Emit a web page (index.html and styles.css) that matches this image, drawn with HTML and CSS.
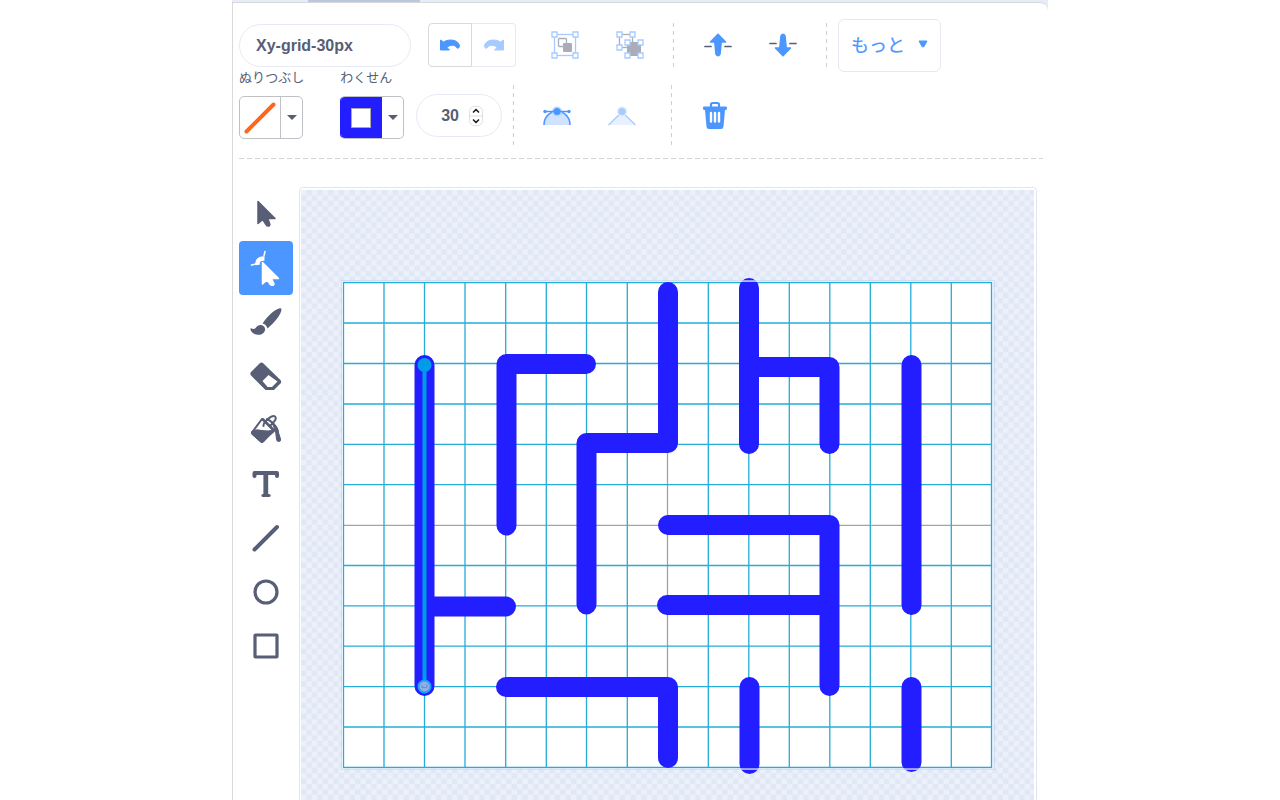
FILE: index.html
```html
<!DOCTYPE html>
<html lang="ja">
<head>
<meta charset="utf-8">
<title>Xy-grid-30px</title>
<link rel="stylesheet" href="styles.css">
</head>
<body>
<div class="editor">
  <div class="tabs"><div class="tab"></div></div>
  <main class="panel">
    <div class="toolbar">
      <div class="row">
        <input class="pill name" type="text" value="Xy-grid-30px" aria-label="コスチューム">
        <div class="history">
          <button class="undo" type="button" aria-label="とりけし">
            <svg width="22" height="16" viewBox="0 0 22 16"><path fill="#4c97ff" stroke="#4c97ff" stroke-linejoin="round" d="M1.500 3V13H10.500L8 10.500C11 7.500 16 7.500 17.500 10.500 18.500 12 20.500 11 20.500 9 19.500 2.500 10 1.500 4.500 5Z"/></svg>
          </button>
          <button class="redo" type="button" aria-label="やりなおし" disabled>
            <svg width="22" height="16" viewBox="0 0 22 16"><path fill="#a6cbff" stroke="#a6cbff" stroke-linejoin="round" d="M20.500 3V13H11.500L14 10.500C11 7.500 6 7.500 4.500 10.500 3.500 12 1.500 11 1.500 9 2.500 2.500 12 1.500 17.500 5Z"/></svg>
          </button>
        </div>
        <div class="group pair">
          <button type="button" aria-label="グループか" disabled>
            <svg width="28" height="28" viewBox="0 0 28 28" fill="none"><rect x="3.500" y="3.500" width="21" height="21" stroke="#a6cbff" stroke-width="1.300"/><rect x="7.500" y="7.500" width="8" height="8" rx="1" stroke="#aaacba" stroke-width="1.300"/><rect x="12" y="12" width="9" height="9" rx="1" fill="#aaacba"/><g fill="#fff" stroke="#a6cbff" stroke-width="1.300"><path d="M1 1h5v5H1zM22 1h5v5h-5zM1 22h5v5H1zM22 22h5v5h-5z"/></g></svg>
          </button>
          <button type="button" aria-label="グループかいじょ" disabled>
            <svg width="28" height="28" viewBox="0 0 28 28" fill="none"><rect x="3.500" y="3.500" width="13" height="13" stroke="#aaacba" stroke-width="1.300"/><rect x="11" y="11" width="14" height="14" fill="#aaacba"/><g fill="#fff" stroke="#a6cbff" stroke-width="1.300"><path d="M1 1h5v5H1zM14 1h5v5h-5zM1 14h5v5H1zM9 9h5v5H9zM22 9h5v5h-5zM9 22h5v5H9zM22 22h5v5h-5z"/></g></svg>
          </button>
        </div>
        <span class="divider"></span>
        <div class="order pair">
          <button type="button" aria-label="てまえにだす">
            <svg width="28" height="24" viewBox="0 0 28 24"><path stroke="#575e75" stroke-width="1.700" stroke-linecap="round" d="M1 13.500h6M21 13.500h6"/><path fill="#4c97ff" stroke="#4c97ff" stroke-width="1.600" stroke-linejoin="round" d="M14 1.300 21.500 9H17.200L16 21Q14 24.500 12 21L10.800 9H6.500Z"/></svg>
          </button>
          <button type="button" aria-label="おくにさげる">
            <svg width="28" height="24" viewBox="0 0 28 24"><path stroke="#575e75" stroke-width="1.700" stroke-linecap="round" d="M1 10.500h6M21 10.500h6"/><path fill="#4c97ff" stroke="#4c97ff" stroke-width="1.600" stroke-linejoin="round" d="M14 22.700 21.500 15H17.200L16 3Q14-.5 12 3L10.800 15H6.500Z"/></svg>
          </button>
        </div>
        <span class="divider"></span>
        <button class="more" type="button">もっと
          <svg width="10" height="8" viewBox="0 0 10 8"><path fill="#4c97ff" stroke="#4c97ff" stroke-linejoin="round" d="M1 1h8L6 6.500Q5 7.500 4 6.500Z"/></svg>
        </button>
      </div>
      <div class="row second">
        <div class="field">
          <span class="caption">ぬりつぶし</span>
          <button class="swatch" type="button" aria-label="ぬりつぶし">
            <span class="color"><svg width="32" height="32" viewBox="0 0 32 32"><path stroke="#ff661a" stroke-width="4" stroke-linecap="round" d="M2.500 29.500 29.500 2.500"/></svg></span>
            <span class="arrow"></span>
          </button>
        </div>
        <div class="field outline">
          <span class="caption">わくせん</span>
          <button class="swatch filled" type="button" aria-label="わくせん">
            <span class="color blue"><span class="hole"></span></span>
            <span class="arrow"></span>
          </button>
        </div>
        <label class="pill width">
          <input type="number" value="30" aria-label="わくせんのふとさ">
          <svg width="14" height="20" viewBox="0 0 14 20" fill="none"><rect x=".5" y=".5" width="13" height="19" rx="5" stroke="#dedede"/><path stroke="#dedede" d="M0 10h14"/><path stroke="#222" stroke-width="1.700" stroke-linecap="round" stroke-linejoin="round" d="M4.500 6 7 3.500 9.500 6M4.500 14 7 16.500 9.500 14"/></svg>
        </label>
        <span class="divider tall"></span>
        <div class="points pair">
          <button type="button" aria-label="きょくせん">
            <svg width="28" height="20" viewBox="0 0 28 20"><path fill="#cfe2ff" stroke="#4c97ff" stroke-width="1.500" d="M1 19C1 1 27 1 27 19"/><circle cx="14" cy="5.500" r="5" fill="#b8d5ff"/><path stroke="#4c97ff" stroke-width="1.500" d="M2 5.500h24"/><circle cx="14" cy="5.500" r="3.500" fill="#4c97ff"/><circle cx="2" cy="5.500" r="1.700" fill="#4c97ff"/><circle cx="26" cy="5.500" r="1.700" fill="#4c97ff"/></svg>
          </button>
          <button type="button" aria-label="とがる" disabled>
            <svg width="28" height="20" viewBox="0 0 28 20"><path fill="#e8f1ff" stroke="#a6cbff" stroke-width="1.300" d="M.5 19 14 6 27.500 19"/><circle cx="14" cy="5.500" r="5" fill="#dbe9ff"/><circle cx="14" cy="5.500" r="3.500" fill="#a6cbff"/></svg>
          </button>
        </div>
        <span class="divider tall"></span>
        <button class="trash" type="button" aria-label="さくじょ">
          <svg width="26" height="28" viewBox="0 0 26 28"><path fill="none" stroke="#4c97ff" stroke-width="2.200" d="M9 6V3.500Q9 2 10.500 2H15.500Q17 2 17 3.500V6"/><path fill="#4c97ff" d="M2 5.500H24Q25.500 5.500 25 7L24.500 9H23L21.500 25.500Q21.300 28 19 28H7Q4.700 28 4.500 25.500L3 9H1.500L1 7Q.5 5.500 2 5.500Z"/><path stroke="#fff" stroke-width="2.400" stroke-linecap="round" d="M9 12v8.500M13 12v8.500M17 12v8.500"/></svg>
        </button>
      </div>
    </div>
    <div class="work">
      <div class="tools">
        <button class="tool" type="button" aria-label="せんたく"><svg width="32" height="32" viewBox="0 0 32 32"><path fill="#575e75" stroke="#575e75" stroke-width="1.500" stroke-linejoin="round" d="M8 3.500V25.500L12.700 21.500 16 26.500Q17.500 28.800 19.500 27.500 20.300 26.500 19.500 25L17.800 20.500H25Z"/></svg></button>
        <button class="tool active" type="button" aria-label="かたちをかえる"><svg width="32" height="36" viewBox="0 0 32 36"><path fill="none" stroke="#fff" stroke-width="1.500" stroke-linecap="round" d="M1.500 15 6 14M14 5.500 15 1.500"/><path fill="none" stroke="#fff" stroke-width="4.500" d="M7.500 15Q7 8 14.500 8.500"/><path fill="#fff" stroke="#fff" stroke-width="1.500" stroke-linejoin="round" d="M12.500 12.500V34L17 30 20.300 34.500Q21.800 36 23.500 35 24.300 34.200 23.500 33L21.500 28.500H28.500Z"/></svg></button>
        <button class="tool" type="button" aria-label="ふで"><svg width="32" height="32" viewBox="0 0 32 32" fill="#575e75"><path d="M31 2.500C28 .5 17 10 12.500 17.500Q16 18 17.500 22.500C24 17 31 9 31.500 3.500ZM11 19C6.500 18.500 6 23.500 3 23 1.500 22.700.2 21.500.5 23.500 1 27 7 30.500 12 28 17 25 15.500 19.500 11 19Z"/></svg></button>
        <button class="tool" type="button" aria-label="けしゴム"><svg width="32" height="32" viewBox="0 0 32 32"><path fill="#575e75" stroke="#575e75" stroke-width="2" stroke-linejoin="round" d="M10.500 4 1.500 13Q1 14 2 15L16 29H23.500L30 22.500Q30.500 21.500 29.500 20.500L12.500 4Q11.500 3 10.500 4Z"/><path fill="#fff" d="M18.500 15 12.500 21 17.500 27H22L27.500 21.500Z"/></svg></button>
        <button class="tool" type="button" aria-label="ぬりつぶし"><svg width="32" height="32" viewBox="0 0 32 32"><path fill="#fff" stroke="#575e75" stroke-width="2" stroke-linejoin="round" d="M12 5 2 18.500 12 27.500 24 17Z"/><path fill="#575e75" stroke="#575e75" stroke-linejoin="round" d="M2 17Q7 15 12 16.500 18 18 25 15.500L13.500 28Q12 29.300 10.500 28L1.500 20Z"/><path fill="none" stroke="#575e75" stroke-width="2" stroke-linecap="round" d="M13.500 12C13 8 22 .5 25 2.500 27.500 5 23 9 21 11M13 5 24 16M17 5Q25 9 28 17"/><path fill="#575e75" stroke="#575e75" d="M23 11Q27 13 28 17L30.500 25Q31 27.500 28.800 27.500 26.500 27.500 26.500 25L25.500 17Z"/></svg></button>
        <button class="tool" type="button" aria-label="テキスト"><svg width="32" height="32" viewBox="0 0 32 32"><path fill="none" stroke="#575e75" stroke-width="4" stroke-linecap="round" stroke-linejoin="round" d="M4.500 8V5H27V8"/><path stroke="#575e75" stroke-width="4.800" d="M15.800 5v23"/><path stroke="#575e75" stroke-width="3.200" stroke-linecap="round" d="M13 27.500h6"/></svg></button>
        <button class="tool" type="button" aria-label="ちょくせん"><svg width="32" height="32" viewBox="0 0 32 32"><path stroke="#575e75" stroke-width="4" stroke-linecap="round" d="M4.500 27.500 27 5"/></svg></button>
        <button class="tool" type="button" aria-label="えん"><svg width="32" height="32" viewBox="0 0 32 32"><circle cx="16" cy="16" r="11" fill="none" stroke="#575e75" stroke-width="3.200"/></svg></button>
        <button class="tool" type="button" aria-label="しかく"><svg width="32" height="32" viewBox="0 0 32 32"><rect x="5" y="5" width="22" height="22" rx=".5" fill="none" stroke="#575e75" stroke-width="3.200"/></svg></button>
      </div>
      <div class="canvas">
        <svg class="drawing" viewBox="300 188 736 640" role="img" aria-label="めいろ">
          <defs>
            <pattern id="checks" x="301" y="190" width="10.800" height="10.800" patternUnits="userSpaceOnUse"><path fill="#ebf0fb" d="M0 0h10.800v10.800H0z"/><path fill="#e1e8f5" d="M5.400 0h5.400v5.400H5.400zM0 5.400h5.400v5.400H0z"/></pattern>
          </defs>
          <path fill="url(#checks)" d="M301 190H1034V828H301z"/>
          <path fill="#fff" d="M343 282h649v486H343z"/>
          <path stroke="#a3a3a3" stroke-width="1.300" d="M343 525.300h648M667.500 283v484"/>
          <path fill="none" stroke="#26acd8" stroke-width="1.300" d="M343.500 282.500h648v485h-648zM343 323h648M343 363.500h648M343 404h648M343 444.300h648M343 484.700h648M343 565.500h648M343 605.800h648M343 646.200h648M343 686.600h648M343 727h648M384 283v484M424.500 283v484M465 283v484M505.700 283v484M546.300 283v484M586.500 283v484M627.300 283v484M708.300 283v484M748.800 283v484M789.300 283v484M829.800 283v484M870.300 283v484M910.800 283v484M951.300 283v484"/>
          <g fill="none" stroke="#221eff" stroke-width="20" stroke-linecap="round" stroke-linejoin="round">
            <path d="M424.500 365V686M424.500 606.500H506M506.500 525.500V364H586M586.500 604.500V443H668V292M749 288V444M749 367H829.500V444M668 525H829.500V686M667 605H829.500M911.500 365V605M506 687H668V758M749.500 687V764M911.500 687V762"/>
          </g>
          <path fill="none" stroke="#c8d7f2" stroke-opacity=".7" stroke-width="1.200" d="M341.500 280.500h653v489h-653z"/>
          <path fill="none" stroke="#eff6ff" stroke-opacity=".7" d="M342.500 281.500h650.500v487.200h-650.500z"/>
          <path stroke="#009be8" stroke-width="4" d="M424.500 365V686"/>
          <circle cx="424.500" cy="365" r="7" fill="#009bea"/>
          <circle cx="424.500" cy="686.500" r="6" fill="#91afe9" stroke="#16a4f4" stroke-width="2"/>
          <path fill="none" stroke="#6a87dc" d="M422 685v3l2-1 1 1 2-1v-3"/>
        </svg>
      </div>
    </div>
  </main>
</div>
</body>
</html>
```
FILE: styles.css
```css
* { box-sizing: border-box; }
body { margin: 0; background: #fff; color: #575e75; font-family: "Liberation Sans", "Noto Sans CJK JP", sans-serif; }
button { display: flex; align-items: center; justify-content: center; margin: 0; padding: 0; border: 0; background: none; font: inherit; color: inherit; }
svg { display: block; flex: none; }
.editor { display: flex; flex-direction: column; max-width: 816px; height: 100vh; margin: 0 auto; overflow: hidden; background: #e6edfa; }
.tabs { flex: none; height: 2px; background: #e6edfa; }
.tab { width: 112px; height: 2px; margin-left: 76px; background: #bac8de; }
.panel { flex: 1; min-height: 0; padding: 16px 5px 0 6px; border: 1px solid #d9d9d9; border-width: 1px 0 0 1px; border-top-right-radius: 8px; background: #fff; }
.toolbar { padding-bottom: 12px; background: repeating-linear-gradient(90deg, #d6d6d6 0 5px, transparent 5px 8px) left bottom / 100% 1px no-repeat; }
.row { display: flex; align-items: center; height: 52px; }
.row.second { align-items: flex-end; height: 76px; }
.pill { height: 43px; border: 1px solid #e5eaf4; border-radius: 22px; background: #fff; color: #575e75; font-size: 16px; font-weight: bold; }
.name { width: 172px; padding: 2px 16px 0; font-family: inherit; }
.history { display: flex; margin-left: 17px; }
.history button { width: 44px; height: 44px; border: 1px solid #d9d9d9; }
.history .undo { border-radius: 4px 0 0 4px; }
.history .redo { border-color: #e5eaf0; border-left: 0; border-radius: 0 4px 4px 0; }
.pair { display: flex; gap: 37px; }
.group { margin-left: 35px; }
.divider { width: 1px; height: 44px; margin-left: 29px; background: repeating-linear-gradient(#d0d0d0 0 4px, transparent 4px 8px); }
.order { margin-left: 30px; }
.more { gap: 13px; width: 103px; height: 53px; padding-bottom: 2px; margin-left: 11px; border: 1px solid #e5eaf0; border-radius: 6px; color: #4c97ff; font-size: 18px; -webkit-text-stroke: 0.2px #4c97ff; }
.field { display: flex; flex-direction: column; gap: 11px; height: 69px; margin-bottom: 8px; }
.outline { margin-left: 36px; }
.caption { height: 15px; font-size: 13px; line-height: 15px; white-space: nowrap; }
.swatch { align-items: stretch; width: 64px; height: 43px; border: 1px solid #bfc1c6; border-radius: 5px; overflow: hidden; }
.color { display: flex; flex: 1; align-items: center; justify-content: center; border-right: 1px solid #bfc1c6; }
.filled { border-left-color: #221eff; }
.blue { margin: -1px 0; background: #221eff; border-color: #221eff; }
.hole { width: 20px; height: 20px; border: 1px solid #aaa; background: #fff; }
.arrow { display: flex; align-items: center; justify-content: center; width: 21px; }
.arrow::before { content: ""; border: 5px solid transparent; border-top-color: #575e75; border-bottom: 0; }
.width { display: flex; align-items: center; gap: 4px; width: 86px; margin: 0 0 10px 12px; padding-left: 24px; }
.width input { width: 24px; padding: 0; border: 0; outline: 0; background: none; color: inherit; font: inherit; appearance: textfield; }
.width input::-webkit-inner-spin-button { appearance: none; }
.tall { height: 62px; margin-left: 11px; }
.points { margin: 0 0 21px 29px; }
.points + .tall { margin-left: 35px; }
.trash { margin: 0 0 18px 30px; }
.work { display: flex; gap: 6px; padding-top: 28px; }
.tools { flex: none; display: flex; flex-direction: column; }
.tool { width: 54px; height: 54px; border-radius: 4px; }
.active { background: #4c97ff; }
.canvas { flex: 1; min-width: 0; margin-right: 6px; border: 1px solid #dfe6f0; border-radius: 4px; }
.drawing { width: 100%; }
```
